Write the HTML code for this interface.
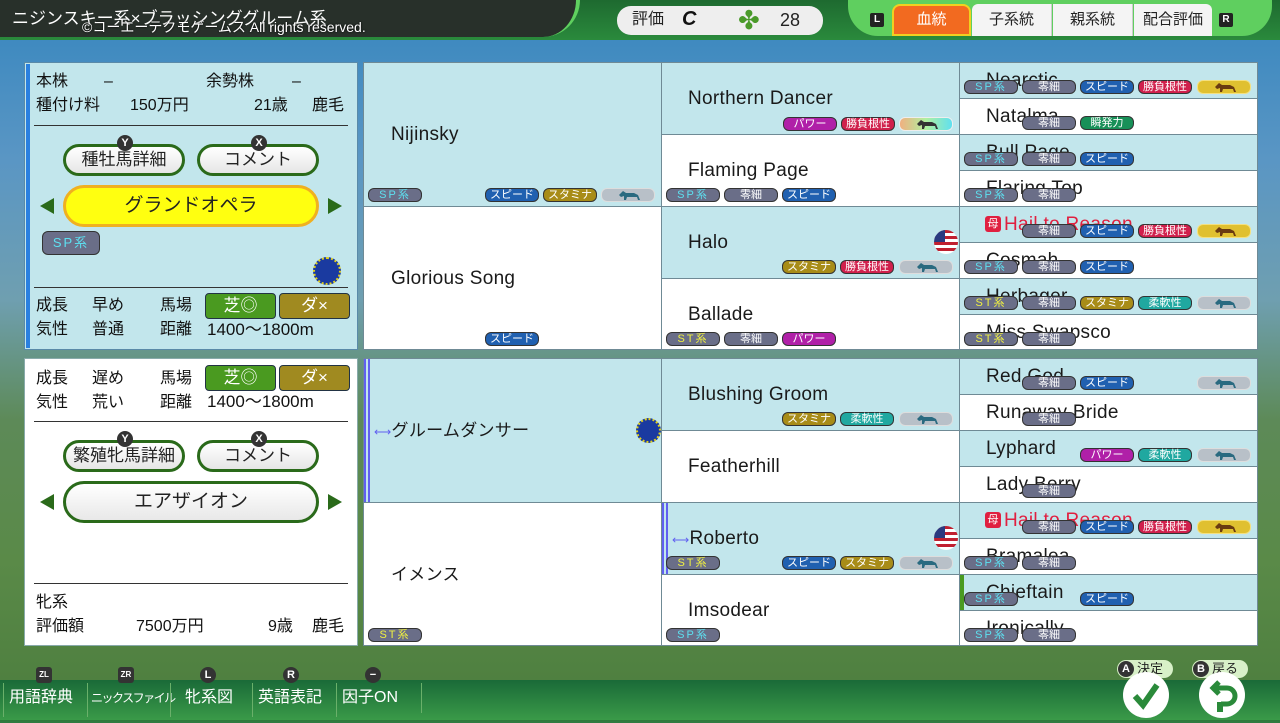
<!DOCTYPE html>
<html><head><meta charset="utf-8"><style>
*{margin:0;padding:0;box-sizing:border-box}
body{width:1280px;height:720px;position:relative;overflow:hidden;font-family:"Liberation Sans","Noto Sans CJK JP",sans-serif;background:linear-gradient(180deg,#2f7a3a 0,#3f8ac0 40px,#5a96c4 160px,#6f9fb0 300px,#5d8a58 420px,#5a8a48 560px,#4f8040 680px)}
.a{position:absolute}
.c{position:absolute;border:1px solid #6f8a95}
.m{background:#c2e6ec}.f{background:#fff}
.n{position:absolute;font-size:19px;color:#1a1a1a;white-space:nowrap;letter-spacing:.3px;line-height:22px}
.t{position:absolute;height:14px;width:54px;border:1px solid #333;border-radius:6px;font-size:11px;line-height:12px;text-align:center;color:#fff;font-style:normal;white-space:nowrap}
.sp{background:#6a6e88;color:#5de0f0;letter-spacing:2px}
.st{background:#6a6e88;color:#f0f040;letter-spacing:2px}
.z{background:#6a6e88}
.sd{background:#2060b0}.sm{background:#a88c18}.kc{background:#d0204c}.pw{background:#b020a8}.jn{background:#20a8a0}.ss{background:#189058}
.hg{background:#b8c0c8;border-color:#ddd}.hy{background:#e0c030;border-color:#f4e080}.hr{background:linear-gradient(90deg,#f0b080,#b0f0a0,#60e0f0);border-color:#eee}
.h svg{width:30px;height:12px}
.lp{font-size:16px;color:#1a5a2a}
.lt{position:absolute;font-size:16px;color:#111;white-space:nowrap;line-height:20px}
.btn{position:absolute;height:32px;border:3px solid #2a6a1a;border-radius:16px;background:linear-gradient(#fff,#e6e6e6);font-size:17px;text-align:center;line-height:26px;color:#222}
.ic{position:absolute;width:16px;height:16px;border-radius:50%;background:#333;color:#fff;font-size:11px;font-weight:bold;text-align:center;line-height:16px}
.arl{position:absolute;width:0;height:0;border-top:8px solid transparent;border-bottom:8px solid transparent}
.bt{position:absolute;top:683px;height:34px;font-size:16px;color:#fff;line-height:30px;border-left:1px solid #6ab06a;padding-left:5px;white-space:nowrap}
</style></head><body>
<div class="a" style="left:0;top:0;width:1280px;height:40px;background:linear-gradient(#1e6a30,#2a8a3c)"></div>
<div class="a" style="left:0;top:0;width:580px;height:37px;background:#28302a;border-radius:0 0 60px 0;border-right:4px solid #5fd05f"></div>
<div class="a" style="left:12px;top:9px;font-size:17px;line-height:20px;color:#fff;white-space:nowrap">ニジンスキー系×ブラッシンググルーム系</div>
<div class="a" style="left:82px;top:18px;font-size:14px;line-height:18px;color:#fff;white-space:nowrap;text-shadow:0 0 2px #000">©コーエーテクモゲームス All rights reserved.</div>
<div class="a" style="left:617px;top:6px;width:206px;height:29px;background:#eee;border-radius:14px"></div>
<div class="a" style="left:632px;top:10px;font-size:16px;line-height:20px;color:#222">評価</div>
<div class="a" style="left:682px;top:8px;font-size:20px;line-height:22px;font-weight:bold;font-style:italic;color:#111">C</div>
<div class="a" style="left:738px;top:8px;width:26px;height:24px;color:#4a9a2a;font-size:26px;line-height:24px">✤</div>
<div class="a" style="left:780px;top:10px;font-size:18px;line-height:20px;color:#222">28</div>
<div class="a" style="left:848px;top:0;width:424px;height:36px;background:#5fcf5f;border-radius:0 0 30px 30px"></div>
<div class="a" style="left:870px;top:13px;width:14px;height:14px;background:#222;color:#fff;font-size:10px;font-weight:bold;text-align:center;line-height:14px;border-radius:2px">L</div>
<div class="a" style="left:1219px;top:13px;width:14px;height:14px;background:#222;color:#fff;font-size:10px;font-weight:bold;text-align:center;line-height:14px;border-radius:2px">R</div>
<div class="a" style="left:892px;top:4px;width:79px;height:32px;background:#f26a20;border:2px solid #f0d020;border-radius:8px 8px 0 0;color:#fff;font-size:15px;text-align:center;line-height:28px">血統</div>
<div class="a" style="left:972px;top:4px;width:80px;height:32px;background:#f4f4f4;border-right:1px solid #ccc;font-size:15px;text-align:center;line-height:32px;color:#222;border-radius:6px 0 0 0">子系統</div>
<div class="a" style="left:1053px;top:4px;width:80px;height:32px;background:#f4f4f4;border-right:1px solid #ccc;font-size:15px;text-align:center;line-height:32px;color:#222">親系統</div>
<div class="a" style="left:1134px;top:4px;width:78px;height:32px;background:#f4f4f4;font-size:15px;text-align:center;line-height:32px;color:#222;border-radius:0 6px 0 0">配合評価</div>

<div class="a" style="left:24px;top:62px;width:334px;height:288px;background:#c2e6ec;border:1px solid #5a8aa8"></div>
<div class="a" style="left:26px;top:64px;width:4px;height:284px;background:#2a80e0"></div>
<div class="lt lp" style="left:36px;top:72px">本株</div><div class="lt" style="left:104px;top:72px">–</div>
<div class="lt lp" style="left:206px;top:72px">余勢株</div><div class="lt" style="left:292px;top:72px">–</div>
<div class="lt lp" style="left:36px;top:96px">種付け料</div><div class="lt" style="left:130px;top:96px">150万円</div>
<div class="lt" style="left:254px;top:96px">21歳</div><div class="lt" style="left:312px;top:96px">鹿毛</div>
<div class="a" style="left:34px;top:125px;width:314px;height:1px;background:#333"></div>
<div class="btn" style="left:63px;top:144px;width:122px">種牡馬詳細</div>
<div class="btn" style="left:197px;top:144px;width:122px">コメント</div>
<div class="ic" style="left:117px;top:135px">Y</div><div class="ic" style="left:251px;top:135px">X</div>
<div class="a" style="left:63px;top:185px;width:256px;height:42px;background:#ffff10;border:3px solid #f0b020;border-radius:21px;font-size:19px;text-align:center;line-height:36px;color:#222">グランドオペラ</div>
<div class="arl" style="left:40px;top:198px;border-right:14px solid #2a6a1a"></div>
<div class="arl" style="left:328px;top:198px;border-left:14px solid #2a6a1a"></div>
<div class="t sp" style="left:42px;top:231px;width:58px;height:24px;line-height:22px;font-size:13px">SP系</div>
<div class="a" style="left:313px;top:257px;width:28px;height:28px;border-radius:50%;background:#1a3aa0;border:2px dotted #e0d020"></div>
<div class="a" style="left:34px;top:287px;width:314px;height:1px;background:#333"></div>
<div class="lt lp" style="left:36px;top:296px">成長</div><div class="lt" style="left:92px;top:296px">早め</div><div class="lt lp" style="left:160px;top:296px">馬場</div>
<div class="lt lp" style="left:36px;top:320px">気性</div><div class="lt" style="left:92px;top:320px">普通</div><div class="lt lp" style="left:160px;top:320px">距離</div>
<div class="a" style="left:205px;top:293px;width:71px;height:26px;background:#4a9a20;border:1px solid #234;border-radius:4px;color:#fff;font-size:17px;text-align:center;line-height:24px">芝◎</div>
<div class="a" style="left:279px;top:293px;width:71px;height:26px;background:#a08a20;border:1px solid #234;border-radius:4px;color:#fff;font-size:17px;text-align:center;line-height:24px">ダ×</div>
<div class="lt" style="left:207px;top:320px;font-size:17px">1400～1800m</div>

<div class="a" style="left:24px;top:358px;width:334px;height:288px;background:#fff;border:1px solid #8aa"></div>
<div class="lt lp" style="left:36px;top:369px">成長</div><div class="lt" style="left:92px;top:369px">遅め</div><div class="lt lp" style="left:160px;top:369px">馬場</div>
<div class="lt lp" style="left:36px;top:393px">気性</div><div class="lt" style="left:92px;top:393px">荒い</div><div class="lt lp" style="left:160px;top:393px">距離</div>
<div class="a" style="left:205px;top:365px;width:71px;height:26px;background:#4a9a20;border:1px solid #234;border-radius:4px;color:#fff;font-size:17px;text-align:center;line-height:24px">芝◎</div>
<div class="a" style="left:279px;top:365px;width:71px;height:26px;background:#a08a20;border:1px solid #234;border-radius:4px;color:#fff;font-size:17px;text-align:center;line-height:24px">ダ×</div>
<div class="lt" style="left:207px;top:392px;font-size:17px">1400～1800m</div>
<div class="a" style="left:34px;top:421px;width:314px;height:1px;background:#333"></div>
<div class="btn" style="left:63px;top:440px;width:122px">繁殖牝馬詳細</div>
<div class="btn" style="left:197px;top:440px;width:122px">コメント</div>
<div class="ic" style="left:117px;top:431px">Y</div><div class="ic" style="left:251px;top:431px">X</div>
<div class="a" style="left:63px;top:481px;width:256px;height:42px;background:linear-gradient(#fff,#e8e8e8);border:3px solid #2a6a1a;border-radius:21px;font-size:19px;text-align:center;line-height:36px;color:#222">エアザイオン</div>
<div class="arl" style="left:40px;top:494px;border-right:14px solid #2a6a1a"></div>
<div class="arl" style="left:328px;top:494px;border-left:14px solid #2a6a1a"></div>
<div class="a" style="left:34px;top:583px;width:314px;height:1px;background:#333"></div>
<div class="lt lp" style="left:36px;top:593px">牝系</div>
<div class="lt lp" style="left:36px;top:617px">評価額</div><div class="lt" style="left:136px;top:617px">7500万円</div>
<div class="lt" style="left:268px;top:617px">9歳</div><div class="lt" style="left:312px;top:617px">鹿毛</div>

<div class="c m" style="left:363px;top:62px;width:299px;height:145px"></div>
<div class="c f" style="left:363px;top:206px;width:299px;height:144px"></div>
<div class="c m" style="left:661px;top:62px;width:299px;height:73px"></div>
<div class="c f" style="left:661px;top:134px;width:299px;height:73px"></div>
<div class="c m" style="left:661px;top:206px;width:299px;height:73px"></div>
<div class="c f" style="left:661px;top:278px;width:299px;height:72px"></div>
<div class="c m" style="left:959px;top:62px;width:299px;height:37px"></div>
<div class="c f" style="left:959px;top:98px;width:299px;height:37px"></div>
<div class="c m" style="left:959px;top:134px;width:299px;height:37px"></div>
<div class="c f" style="left:959px;top:170px;width:299px;height:37px"></div>
<div class="c m" style="left:959px;top:206px;width:299px;height:37px"></div>
<div class="c f" style="left:959px;top:242px;width:299px;height:37px"></div>
<div class="c m" style="left:959px;top:278px;width:299px;height:37px"></div>
<div class="c f" style="left:959px;top:314px;width:299px;height:36px"></div>
<div class="c m" style="left:363px;top:358px;width:299px;height:145px"></div>
<div class="c f" style="left:363px;top:502px;width:299px;height:144px"></div>
<div class="c m" style="left:661px;top:358px;width:299px;height:73px"></div>
<div class="c f" style="left:661px;top:430px;width:299px;height:73px"></div>
<div class="c m" style="left:661px;top:502px;width:299px;height:73px"></div>
<div class="c f" style="left:661px;top:574px;width:299px;height:72px"></div>
<div class="c m" style="left:959px;top:358px;width:299px;height:37px"></div>
<div class="c f" style="left:959px;top:394px;width:299px;height:37px"></div>
<div class="c m" style="left:959px;top:430px;width:299px;height:37px"></div>
<div class="c f" style="left:959px;top:466px;width:299px;height:37px"></div>
<div class="c m" style="left:959px;top:502px;width:299px;height:37px"></div>
<div class="c f" style="left:959px;top:538px;width:299px;height:37px"></div>
<div class="c m" style="left:959px;top:574px;width:299px;height:37px"></div>
<div class="c f" style="left:959px;top:610px;width:299px;height:36px"></div>
<div class="a" style="left:364px;top:359px;width:6px;height:143px;border-left:2px solid #6060f0;border-right:2px solid #6060f0"></div>
<div class="a" style="left:662px;top:503px;width:6px;height:71px;border-left:2px solid #6060f0;border-right:2px solid #6060f0"></div>
<div class="a" style="left:960px;top:575px;width:4px;height:35px;background:#4a9a20"></div>

<div class="n" style="left:391px;top:124px">Nijinsky</div>
<div class="n" style="left:391px;top:268px">Glorious Song</div>
<div class="n" style="left:688px;top:88px">Northern Dancer</div>
<div class="n" style="left:688px;top:160px">Flaming Page</div>
<div class="n" style="left:688px;top:232px">Halo</div>
<div class="n" style="left:688px;top:304px">Ballade</div>
<div class="n" style="left:986px;top:70px">Nearctic</div>
<div class="n" style="left:986px;top:106px">Natalma</div>
<div class="n" style="left:986px;top:142px">Bull Page</div>
<div class="n" style="left:986px;top:178px">Flaring Top</div>
<div class="n" style="left:1004px;top:214px;color:#e02040">Hail to Reason</div>
<div class="a" style="left:985px;top:216px;width:16px;height:16px;background:#e02040;border-radius:3px;color:#fff;font-size:11px;text-align:center;line-height:16px">母</div>
<div class="n" style="left:986px;top:250px">Cosmah</div>
<div class="n" style="left:986px;top:286px">Herbager</div>
<div class="n" style="left:986px;top:322px">Miss Swapsco</div>
<div class="n" style="left:374px;top:420px;font-size:17px"><span style="color:#6060f0;font-size:12px">⟷</span>グルームダンサー</div>
<div class="n" style="left:391px;top:564px;font-size:17px">イメンス</div>
<div class="n" style="left:688px;top:384px">Blushing Groom</div>
<div class="n" style="left:688px;top:456px">Featherhill</div>
<div class="n" style="left:672px;top:528px"><span style="color:#6060f0;font-size:12px">⟷</span>Roberto</div>
<div class="n" style="left:688px;top:600px">Imsodear</div>
<div class="n" style="left:986px;top:366px">Red God</div>
<div class="n" style="left:986px;top:402px">Runaway Bride</div>
<div class="n" style="left:986px;top:438px">Lyphard</div>
<div class="n" style="left:986px;top:474px">Lady Berry</div>
<div class="n" style="left:1004px;top:510px;color:#e02040">Hail to Reason</div>
<div class="a" style="left:985px;top:512px;width:16px;height:16px;background:#e02040;border-radius:3px;color:#fff;font-size:11px;text-align:center;line-height:16px">母</div>
<div class="n" style="left:986px;top:546px">Bramalea</div>
<div class="n" style="left:986px;top:582px">Chieftain</div>
<div class="n" style="left:986px;top:618px">Ironically</div>

<div class="a" style="left:934px;top:230px;width:24px;height:24px;border-radius:50%;background:repeating-linear-gradient(#c02030 0 3px,#fff 3px 6px);overflow:hidden"><div style="width:11px;height:12px;background:#2a3a80"></div></div>
<div class="a" style="left:934px;top:526px;width:24px;height:24px;border-radius:50%;background:repeating-linear-gradient(#c02030 0 3px,#fff 3px 6px);overflow:hidden"><div style="width:11px;height:12px;background:#2a3a80"></div></div>
<div class="a" style="left:636px;top:418px;width:25px;height:25px;border-radius:50%;background:#1a3aa0;border:2px dotted #e0d020"></div>

<i class="t sp" style="left:368px;top:188px">SP系</i><i class="t sd" style="left:485px;top:188px">スピード</i><i class="t sm" style="left:543px;top:188px">スタミナ</i><i class="t hg h" style="left:601px;top:188px"><svg viewBox="0 0 30 12"><path d="M6 6l4-4 3 2h8l4 2 2 5h-2l-1-3h-10l-1 3h-2l0-4-3 1z" fill="#2a6a80"/></svg></i>
<i class="t sd" style="left:485px;top:332px">スピード</i>
<i class="t pw" style="left:783px;top:117px">パワー</i><i class="t kc" style="left:841px;top:117px">勝負根性</i><i class="t hr h" style="left:899px;top:117px"><svg viewBox="0 0 30 12"><path d="M6 6l4-4 3 2h8l4 2 2 5h-2l-1-3h-10l-1 3h-2l0-4-3 1z" fill="#333"/></svg></i>
<i class="t sp" style="left:666px;top:188px">SP系</i><i class="t z" style="left:724px;top:188px">零細</i><i class="t sd" style="left:782px;top:188px">スピード</i>
<i class="t sm" style="left:782px;top:260px">スタミナ</i><i class="t kc" style="left:840px;top:260px">勝負根性</i><i class="t hg h" style="left:899px;top:260px"><svg viewBox="0 0 30 12"><path d="M6 6l4-4 3 2h8l4 2 2 5h-2l-1-3h-10l-1 3h-2l0-4-3 1z" fill="#2a6a80"/></svg></i>
<i class="t st" style="left:666px;top:332px">ST系</i><i class="t z" style="left:724px;top:332px">零細</i><i class="t pw" style="left:782px;top:332px">パワー</i>

<i class="t sp" style="left:964px;top:80px">SP系</i><i class="t z" style="left:1022px;top:80px">零細</i><i class="t sd" style="left:1080px;top:80px">スピード</i><i class="t kc" style="left:1138px;top:80px">勝負根性</i><i class="t hy h" style="left:1197px;top:80px"><svg viewBox="0 0 30 12"><path d="M6 6l4-4 3 2h8l4 2 2 5h-2l-1-3h-10l-1 3h-2l0-4-3 1z" fill="#6a3a10"/></svg></i>
<i class="t z" style="left:1022px;top:116px">零細</i><i class="t ss" style="left:1080px;top:116px">瞬発力</i>
<i class="t sp" style="left:964px;top:152px">SP系</i><i class="t z" style="left:1022px;top:152px">零細</i><i class="t sd" style="left:1080px;top:152px">スピード</i>
<i class="t sp" style="left:964px;top:188px">SP系</i><i class="t z" style="left:1022px;top:188px">零細</i>
<i class="t z" style="left:1022px;top:224px">零細</i><i class="t sd" style="left:1080px;top:224px">スピード</i><i class="t kc" style="left:1138px;top:224px">勝負根性</i><i class="t hy h" style="left:1197px;top:224px"><svg viewBox="0 0 30 12"><path d="M6 6l4-4 3 2h8l4 2 2 5h-2l-1-3h-10l-1 3h-2l0-4-3 1z" fill="#6a3a10"/></svg></i>
<i class="t sp" style="left:964px;top:260px">SP系</i><i class="t z" style="left:1022px;top:260px">零細</i><i class="t sd" style="left:1080px;top:260px">スピード</i>
<i class="t st" style="left:964px;top:296px">ST系</i><i class="t z" style="left:1022px;top:296px">零細</i><i class="t sm" style="left:1080px;top:296px">スタミナ</i><i class="t jn" style="left:1138px;top:296px">柔軟性</i><i class="t hg h" style="left:1197px;top:296px"><svg viewBox="0 0 30 12"><path d="M6 6l4-4 3 2h8l4 2 2 5h-2l-1-3h-10l-1 3h-2l0-4-3 1z" fill="#2a6a80"/></svg></i>
<i class="t st" style="left:964px;top:332px">ST系</i><i class="t z" style="left:1022px;top:332px">零細</i>

<i class="t st" style="left:368px;top:628px">ST系</i>
<i class="t sm" style="left:782px;top:412px">スタミナ</i><i class="t jn" style="left:840px;top:412px">柔軟性</i><i class="t hg h" style="left:899px;top:412px"><svg viewBox="0 0 30 12"><path d="M6 6l4-4 3 2h8l4 2 2 5h-2l-1-3h-10l-1 3h-2l0-4-3 1z" fill="#2a6a80"/></svg></i>
<i class="t st" style="left:666px;top:556px">ST系</i><i class="t sd" style="left:782px;top:556px">スピード</i><i class="t sm" style="left:840px;top:556px">スタミナ</i><i class="t hg h" style="left:899px;top:556px"><svg viewBox="0 0 30 12"><path d="M6 6l4-4 3 2h8l4 2 2 5h-2l-1-3h-10l-1 3h-2l0-4-3 1z" fill="#2a6a80"/></svg></i>
<i class="t sp" style="left:666px;top:628px">SP系</i>

<i class="t z" style="left:1022px;top:376px">零細</i><i class="t sd" style="left:1080px;top:376px">スピード</i><i class="t hg h" style="left:1197px;top:376px"><svg viewBox="0 0 30 12"><path d="M6 6l4-4 3 2h8l4 2 2 5h-2l-1-3h-10l-1 3h-2l0-4-3 1z" fill="#2a6a80"/></svg></i>
<i class="t z" style="left:1022px;top:412px">零細</i>
<i class="t pw" style="left:1080px;top:448px">パワー</i><i class="t jn" style="left:1138px;top:448px">柔軟性</i><i class="t hg h" style="left:1197px;top:448px"><svg viewBox="0 0 30 12"><path d="M6 6l4-4 3 2h8l4 2 2 5h-2l-1-3h-10l-1 3h-2l0-4-3 1z" fill="#2a6a80"/></svg></i>
<i class="t z" style="left:1022px;top:484px">零細</i>
<i class="t z" style="left:1022px;top:520px">零細</i><i class="t sd" style="left:1080px;top:520px">スピード</i><i class="t kc" style="left:1138px;top:520px">勝負根性</i><i class="t hy h" style="left:1197px;top:520px"><svg viewBox="0 0 30 12"><path d="M6 6l4-4 3 2h8l4 2 2 5h-2l-1-3h-10l-1 3h-2l0-4-3 1z" fill="#6a3a10"/></svg></i>
<i class="t sp" style="left:964px;top:556px">SP系</i><i class="t z" style="left:1022px;top:556px">零細</i>
<i class="t sp" style="left:964px;top:592px">SP系</i><i class="t sd" style="left:1080px;top:592px">スピード</i>
<i class="t sp" style="left:964px;top:628px">SP系</i><i class="t z" style="left:1022px;top:628px">零細</i>

<div class="a" style="left:0;top:680px;width:1280px;height:40px;background:linear-gradient(#1a6a38,#3a9a48)"></div>
<div class="bt" style="left:3px">用語辞典</div>
<div class="bt" style="left:87px;font-size:12px;letter-spacing:-1.5px;padding-left:3px">ニックスファイル</div>
<div class="bt" style="left:170px;padding-left:14px">牝系図</div>
<div class="bt" style="left:252px">英語表記</div>
<div class="bt" style="left:336px">因子ON</div>
<div class="a" style="left:421px;top:683px;width:1px;height:30px;background:#6ab06a"></div>
<div class="ic" style="left:36px;top:667px;border-radius:3px;font-size:8px">ZL</div>
<div class="ic" style="left:118px;top:667px;border-radius:3px;font-size:8px">ZR</div>
<div class="ic" style="left:200px;top:667px">L</div>
<div class="ic" style="left:283px;top:667px">R</div>
<div class="ic" style="left:365px;top:667px">−</div>
<div class="a" style="left:1117px;top:660px;width:56px;height:18px;background:#d8f0c8;border-radius:9px;font-size:13px;color:#222;line-height:18px;padding-left:20px">決定</div>
<div class="ic" style="left:1118px;top:661px">A</div>
<div class="a" style="left:1192px;top:660px;width:56px;height:18px;background:#d8f0c8;border-radius:9px;font-size:13px;color:#222;line-height:18px;padding-left:20px">戻る</div>
<div class="ic" style="left:1193px;top:661px">B</div>
<div class="a" style="left:1123px;top:672px;width:46px;height:46px;border-radius:50%;background:#fff"><svg viewBox="0 0 46 46" width="46" height="46"><path d="M12 24l8 9 14-20" stroke="#2a8a3a" stroke-width="6" fill="none"/></svg></div>
<div class="a" style="left:1199px;top:672px;width:46px;height:46px;border-radius:50%;background:#fff"><svg viewBox="0 0 46 46" width="46" height="46"><path d="M16 16h12a8 8 0 0 1 0 16h-6M20 10l-6 6 6 6" stroke="#2a8a3a" stroke-width="5" fill="none"/><rect x="18" y="30" width="6" height="10" fill="#2a8a3a"/></svg></div>
</body></html>
